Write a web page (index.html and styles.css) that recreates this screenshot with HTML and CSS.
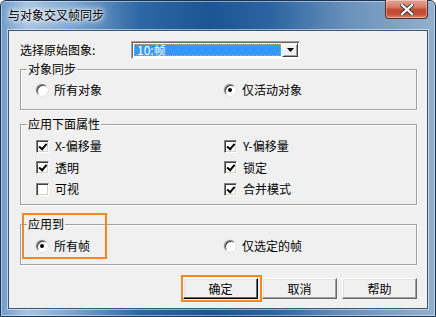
FILE: index.html
```html
<!DOCTYPE html>
<html lang="zh-CN">
<head>
    <meta charset="UTF-8">
    <title>与对象交叉帧同步</title>
    <link rel="stylesheet" href="styles.css">
</head>
<body>
    <div class="window">
        <!-- Title bar -->
        <div class="titlebar">
            <span class="title">与对象交叉帧同步</span>
            <div class="close-btn">
                <svg width="14" height="11" viewBox="0 0 14 11">
                    <path d="M2 1 L12 10 M12 1 L2 10" stroke="#3b3b3b" stroke-width="4" stroke-linecap="square"/>
                    <path d="M2 1 L12 10 M12 1 L2 10" stroke="#ffffff" stroke-width="2.2" stroke-linecap="square"/>
                </svg>
            </div>
        </div>

        <div class="client">
            <!-- Source image -->
            <div class="source-row">
                <span class="source-label">选择原始图象:</span>
                <div class="combo">
                    <div class="combo-value"><span>10:帧</span></div>
                    <div class="combo-arrow">
                        <svg width="7" height="4" viewBox="0 0 7 4"><path d="M0 0 H7 L3.5 4 Z" fill="#000"/></svg>
                    </div>
                </div>
            </div>

            <!-- Object sync -->
            <div class="group group-sync">
                <span class="legend">对象同步</span>
                <div class="row">
                    <label class="opt"><span class="radio"></span>所有对象</label>
                    <label class="opt"><span class="radio checked"></span>仅活动对象</label>
                </div>
            </div>

            <!-- Properties -->
            <div class="group group-props">
                <span class="legend">应用下面属性</span>
                <div class="row">
                    <label class="opt"><span class="check checked"></span>X-偏移量</label>
                    <label class="opt"><span class="check checked"></span>Y-偏移量</label>
                </div>
                <div class="row">
                    <label class="opt"><span class="check checked"></span>透明</label>
                    <label class="opt"><span class="check checked"></span>锁定</label>
                </div>
                <div class="row">
                    <label class="opt"><span class="check"></span>可视</label>
                    <label class="opt"><span class="check checked"></span>合并模式</label>
                </div>
            </div>

            <!-- Apply to -->
            <div class="group group-apply">
                <span class="legend">应用到</span>
                <div class="row">
                    <label class="opt"><span class="radio checked"></span>所有帧</label>
                    <label class="opt"><span class="radio"></span>仅选定的帧</label>
                </div>
            </div>

            <div class="buttons">
                <button class="btn default">确定</button>
                <button class="btn">取消</button>
                <button class="btn">帮助</button>
            </div>

            <!-- Highlight marks -->
            <div class="mark mark-apply"></div>
            <div class="mark mark-ok"></div>
        </div>
    </div>
</body>
</html>
```

FILE: styles.css
```css
/* Dialog: sync frames with object */
body {
    margin: 0;
    padding: 0;
    background: #ffffff;
    font-family: "Noto Sans CJK SC", "Liberation Sans", sans-serif;
    font-size: 12px;
    color: #000;
}

.window {
    width: 436px;
    height: 317px;
    box-sizing: border-box;
    border: 1px solid #1a3558;
    border-radius: 6px 6px 0 0;
    background: linear-gradient(90deg, #6f9cc9 0%, #a9c5e2 6%, #7ea7d0 16%, #2d67a4 32%, #1c5594 48%, #2b64a0 62%, #6a91bb 80%, #93b0cd 100%);
    box-shadow: inset 0 0 0 1px rgba(255, 255, 255, 0.45);
    display: flex;
    flex-direction: column;
}

.titlebar {
    height: 29px;
    position: relative;
    display: flex;
    align-items: center;
    padding-left: 7px;
}

.title {
    line-height: 14px;
    margin-top: -1px;
    text-shadow: 0 0 6px #ffffff, 0 0 10px #ffffff, 0 0 3px #ffffff;
}

.close-btn {
    position: absolute;
    top: -1px;
    right: 7px;
    width: 43px;
    height: 19px;
    box-sizing: border-box;
    border: 1px solid #5b2a22;
    border-top: none;
    border-radius: 0 0 4px 4px;
    background: linear-gradient(180deg, #e2a596 0%, #d47a68 40%, #c1462f 55%, #c7513a 80%, #dc8a6c 100%);
    box-shadow: inset 0 0 0 1px rgba(255, 255, 255, 0.35);
    display: flex;
    align-items: center;
    justify-content: center;
}

.client {
    position: relative;
    margin: 0 7px 7px 7px;
    flex: 1;
    border: 1px solid #3d5677;
    box-shadow: 0 0 0 1px rgba(255, 255, 255, 0.5);
    background: #f0f0f0;
    padding: 10px 10px 0 11px;
}

.source-row {
    display: flex;
    align-items: center;
    height: 18px;
}

.source-label {
    width: 111px;
    line-height: 14px;
}

.combo {
    width: 169px;
    height: 18px;
    box-sizing: border-box;
    border: 1px solid;
    border-color: #a0a0a0 #ffffff #ffffff #a0a0a0;
    box-shadow: inset 1px 1px 0 #696969;
    display: flex;
    padding: 1px 1px 1px 1px;
    background: #ffffff;
}

.combo-value {
    flex: 1;
    margin: 1px 1px 1px 1px;
    background: #3399ff;
    outline: 1px dotted #ff9900;
    outline-offset: -1px;
    color: #ffffff;
    display: flex;
    align-items: center;
    padding-left: 3px;
    line-height: 12px;
}

.combo-arrow {
    width: 16px;
    background: #f0f0f0;
    box-sizing: border-box;
    border: 1px solid;
    border-color: #f0f0f0 #404040 #404040 #f0f0f0;
    box-shadow: inset 1px 1px 0 #ffffff, inset -1px -1px 0 #a0a0a0;
    display: flex;
    align-items: center;
    justify-content: center;
}

.group {
    position: relative;
    width: 397px;
    box-sizing: border-box;
    border: 1px solid #a0a0a0;
    box-shadow: inset 1px 1px 0 #ffffff, 1px 1px 0 #ffffff;
}

.legend {
    position: absolute;
    top: -8px;
    left: 6px;
    padding: 0 1px;
    background: #f0f0f0;
    line-height: 14px;
}

.group-sync {
    margin-top: 10px;
    height: 41px;
    padding-top: 13px;
}

.group-props {
    margin-top: 14px;
    height: 81px;
    padding-top: 14px;
}

.group-apply {
    margin-top: 19px;
    height: 41px;
    padding-top: 14px;
}

.row {
    display: flex;
    height: 14px;
    padding-left: 15px;
}

.group-props .row + .row {
    margin-top: 7.5px;
}

.opt {
    display: flex;
    align-items: center;
    width: 188px;
    line-height: 14px;
    white-space: nowrap;
}

.radio {
    width: 12px;
    height: 12px;
    box-sizing: border-box;
    border-radius: 50%;
    border: 1px solid;
    border-color: #808080 #ffffff #ffffff #808080;
    background: #ffffff;
    box-shadow: inset 1px 1px 0 #404040, 0 0 0 0.5px #d4d0c8;
    margin-right: 6px;
    display: flex;
    align-items: center;
    justify-content: center;
}

.radio.checked::after {
    content: "";
    width: 4px;
    height: 4px;
    border-radius: 50%;
    background: #000;
}

.check {
    width: 13px;
    height: 13px;
    box-sizing: border-box;
    border: 1px solid;
    border-color: #808080 #ffffff #ffffff #808080;
    box-shadow: inset 1px 1px 0 #404040, inset -1px -1px 0 #d4d0c8;
    background: #ffffff;
    margin-right: 6px;
    position: relative;
}

.check.checked::after {
    content: "";
    position: absolute;
    left: 2px;
    top: 1px;
    width: 3px;
    height: 6px;
    border: solid #000;
    border-width: 0 2px 2px 0;
    transform: rotate(40deg) translate(1px, -1px);
}

.buttons {
    width: 397px;
    margin-top: 13px;
    display: flex;
    justify-content: flex-end;
    gap: 5px;
}

.btn {
    width: 75px;
    height: 21px;
    box-sizing: border-box;
    font-family: inherit;
    font-size: 12px;
    color: #000;
    background: #f0f0f0;
    border: 1px solid;
    border-color: #ffffff #696969 #696969 #ffffff;
    box-shadow: inset -1px -1px 0 #a0a0a0, inset 1px 1px 0 #e3e3e3;
    padding: 0;
    line-height: 14px;
}

.btn.default {
    border-color: #ffffff #000000 #000000 #ffffff;
    box-shadow: inset -1px -1px 0 #696969, inset 1px 1px 0 #e3e3e3;
    margin-right: -1px;
}

.mark {
    position: absolute;
    border: 2px solid #f7861f;
    box-sizing: border-box;
}

.mark-apply {
    left: 13px;
    top: 182px;
    width: 85px;
    height: 46px;
}

.mark-ok {
    left: 172px;
    top: 244px;
    width: 81px;
    height: 27px;
}
```
